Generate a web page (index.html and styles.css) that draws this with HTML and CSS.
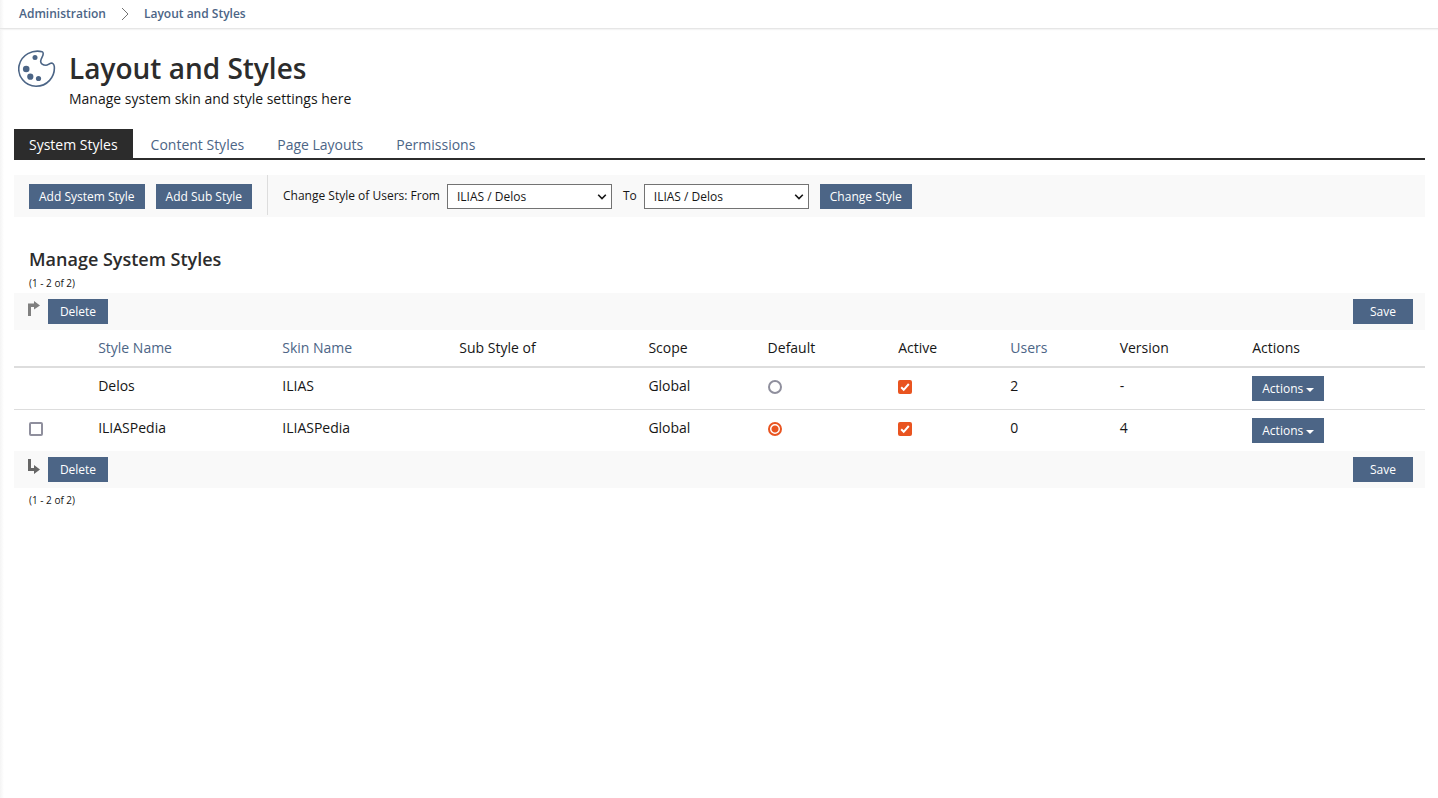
FILE: index.html
```html
<!DOCTYPE html>
<html lang="en">
<head>
<meta charset="utf-8">
<title>Layout and Styles</title>
<link rel="stylesheet" href="styles.css">
</head>
<body>
<nav class="breadcrumb" aria-label="Breadcrumb">
  <a href="#">Administration</a>
  <svg class="crumb-sep" width="8" height="14" viewBox="0 0 8 14" aria-hidden="true"><path d="M1 1l6 6-6 6" fill="none" stroke="#737373" stroke-width="1"/></svg>
  <a href="#">Layout and Styles</a>
</nav>
<main class="content">
  <header class="page-head">
    <svg class="page-icon" width="38" height="38" viewBox="0 0 38 38" aria-hidden="true">
      <path d="M24.2 1.7C14.500 -0.500 3.500 4.500 1.100 15.500C-1 26 7 36.200 18 36.300C29 36.300 37.200 27 36.300 16.500C36.100 14 34.500 12.700 32.700 13.200C30.500 13.900 29.800 15.300 28 15.300C25 15.300 22.400 13.500 22.700 11C23.100 8 25.200 6.500 25.200 3.700C25.200 2.600 25 1.900 24.200 1.700Z" fill="none" stroke="#4c6586" stroke-width="1.600" stroke-linejoin="round"/>
      <g fill="#4c6586"><circle cx="17" cy="7.500" r="2.500"/><circle cx="8.200" cy="19" r="3.300"/><circle cx="12.300" cy="26.700" r="3.100"/><circle cx="20.500" cy="28.500" r="2.600"/></g>
    </svg>
    <div>
      <h1>Layout and Styles</h1>
      <p class="lead">Manage system skin and style settings here</p>
    </div>
  </header>
  <nav class="tabs" aria-label="Sections">
    <a class="tab active" href="#">System Styles</a>
    <a class="tab" href="#">Content Styles</a>
    <a class="tab" href="#">Page Layouts</a>
    <a class="tab" href="#">Permissions</a>
  </nav>
  <form class="toolbar">
    <div class="toolbar-group">
      <button type="button" class="btn">Add System Style</button>
      <button type="button" class="btn">Add Sub Style</button>
    </div>
    <div class="toolbar-group fields">
      <div class="field">
        <label for="from">Change Style of Users: From</label>
        <span class="select"><select id="from"><option>ILIAS / Delos</option></select><svg width="10" height="6" viewBox="0 0 10 6" aria-hidden="true"><path d="M1.200 .8L5 4.600 8.800 .8" fill="none" stroke="#161616" stroke-width="1.600"/></svg></span>
      </div>
      <div class="field">
        <label for="to">To</label>
        <span class="select"><select id="to"><option>ILIAS / Delos</option></select><svg width="10" height="6" viewBox="0 0 10 6" aria-hidden="true"><path d="M1.200 .8L5 4.600 8.800 .8" fill="none" stroke="#161616" stroke-width="1.600"/></svg></span>
      </div>
      <button type="button" class="btn">Change Style</button>
    </div>
  </form>
  <form>
    <h2>Manage System Styles</h2>
    <p class="count">(1 - 2 of 2)</p>
    <div class="bar">
      <svg class="arrow" width="12" height="15" viewBox="0 0 12 15" aria-hidden="true"><path d="M0 15V2.500H6V0L12 4.500 6 8.500V6H3V15Z" fill="#808080"/></svg>
      <button type="button" class="btn wide">Delete</button>
      <button type="button" class="btn wide save">Save</button>
    </div>
    <table>
      <colgroup><col class="c-check"><col class="c-style"><col class="c-skin"><col class="c-sub"><col class="c-scope"><col class="c-default"><col class="c-active"><col class="c-users"><col class="c-version"><col class="c-actions"></colgroup>
      <thead>
        <tr><th></th><th><a href="#">Style Name</a></th><th><a href="#">Skin Name</a></th><th>Sub Style of</th><th>Scope</th><th>Default</th><th>Active</th><th><a href="#">Users</a></th><th>Version</th><th>Actions</th></tr>
      </thead>
      <tbody>
        <tr>
          <td></td><td>Delos</td><td>ILIAS</td><td></td><td>Global</td>
          <td><input type="radio" name="default" aria-label="Delos default"></td>
          <td><input type="checkbox" checked aria-label="Delos active"></td>
          <td>2</td><td>-</td>
          <td><button type="button" class="btn menu">Actions<span class="caret"></span></button></td>
        </tr>
        <tr>
          <td><input type="checkbox" aria-label="Select ILIASPedia"></td><td>ILIASPedia</td><td>ILIASPedia</td><td></td><td>Global</td>
          <td><input type="radio" name="default" checked aria-label="ILIASPedia default"></td>
          <td><input type="checkbox" checked aria-label="ILIASPedia active"></td>
          <td>0</td><td>4</td>
          <td><button type="button" class="btn menu">Actions<span class="caret"></span></button></td>
        </tr>
      </tbody>
    </table>
    <div class="bar">
      <svg class="arrow" width="12" height="15" viewBox="0 0 12 15" aria-hidden="true"><path d="M0 0H3V9H6V6L12 10.500 6 15V12H0Z" fill="#666"/></svg>
      <button type="button" class="btn wide">Delete</button>
      <button type="button" class="btn wide save">Save</button>
    </div>
    <p class="count after">(1 - 2 of 2)</p>
  </form>
</main>
</body>
</html>
```
FILE: styles.css
```css
* { box-sizing: border-box; }
body {
  margin: 0;
  min-height: 100vh;
  font: 14px/20px "Open Sans", sans-serif;
  color: #161616;
  background: #fff linear-gradient(to right, #f4f4f4, #fff) left / 4px 100% no-repeat;
}
a { color: #4c6586; text-decoration: none; }
h1, h2, p { margin: 0; }
.breadcrumb {
  display: flex;
  align-items: center;
  gap: 15px;
  height: 29px;
  padding: 0 19px 1px;
  border-bottom: 1px solid #e6e6e6;
  box-shadow: 0 1px 1px #f4f4f4;
  font-size: 12px;
  font-weight: 600;
}
.content { padding: 21px 13px 0 14px; }
.page-head { display: flex; gap: 13px; padding-left: 4px; }
h1 { font-size: 28px; line-height: 36px; font-weight: 600; color: #2c2c2c; }
.lead { margin-top: 3px; }
.tabs {
  display: flex;
  margin-top: 20px;
  border-bottom: 2px solid #2c2c2c;
}
.tab { padding: 6px 15px 3px; margin-right: 3px; }
.tab.active { background: #2c2c2c; color: #fff; }
.toolbar {
  display: flex;
  margin-top: 15px;
  padding-bottom: 2px;
  background: #f9f9f9;
  font-size: 12px;
}
.toolbar-group { display: flex; align-items: center; gap: 11px; padding: 9px 15px 6px; height: 40px; }
.fields { border-left: 1px solid #ddd; }
.field { display: flex; align-items: center; gap: 7px; }
.field label { padding-bottom: 2px; }
.btn {
  height: 25px;
  padding: 0 10px;
  border: 0;
  background: #4c6586;
  color: #fff;
  font: 12px/17px "Open Sans", sans-serif;
}
.select { display: grid; align-items: center; }
.select > * { grid-area: 1 / 1; }
.select svg { justify-self: end; margin-right: 5px; pointer-events: none; }
select {
  appearance: none;
  width: 165px;
  height: 25px;
  padding: 0 9px;
  border: 1px solid #737373;
  border-radius: 0;
  background: #fff;
  color: #161616;
  font: 12px/17px "Open Sans", sans-serif;
}
h2 { margin: 30px 0 0 15px; font-size: 18px; line-height: 25px; font-weight: 600; color: #2c2c2c; }
.count { padding: 3px 15px 2px; font-size: 10px; line-height: 16px; }
.count.after { padding-top: 4px; }
.bar {
  display: flex;
  align-items: center;
  gap: 8px;
  height: 37px;
  padding: 0 12px 0 14px;
  background: #f9f9f9;
}
.arrow { margin-bottom: 6px; }
.wide { width: 60px; }
.save { margin-left: auto; }
table { width: 100%; table-layout: fixed; border-collapse: separate; border-spacing: 0; }
th { padding: 8px 15px; border-bottom: 2px solid #ddd; font-weight: 400; text-align: left; }
td { height: 41px; padding: 8px 15px; vertical-align: top; }
tbody tr:first-child td { height: 42px; border-bottom: 1px solid #ddd; }
.c-check { width: 4.9%; }
.c-style { width: 13.05%; }
.c-skin { width: 12.55%; }
.c-sub { width: 13.4%; }
.c-scope { width: 8.45%; }
.c-default { width: 9.25%; }
.c-active { width: 7.95%; }
.c-users { width: 7.75%; }
.c-version { width: 9.4%; }
input {
  display: block;
  appearance: none;
  width: 14px;
  height: 14px;
  margin: 4px 0 0;
  border: 2px solid #8f8f9d;
  background: #fff;
}
input[type="checkbox"] { border-radius: 2px; }
input[type="radio"] { border-radius: 50%; }
input:checked { border-color: #e95420; }
input[type="radio"]:checked { background: radial-gradient(circle, #e95420 3px, #fff 4px); }
input[type="checkbox"]:checked {
  background: #e95420 url("data:image/svg+xml,%3Csvg xmlns='http://www.w3.org/2000/svg' viewBox='0 0 10 10'%3E%3Cpath d='M1.200 5.300L3.700 7.800 8.800 2' fill='none' stroke='white' stroke-width='2'/%3E%3C/svg%3E") center / 10px no-repeat;
}
.menu { display: flex; align-items: center; gap: 3px; }
.caret { border: 4px solid transparent; border-top-color: #fff; border-bottom: 0; margin-top: 3px; }
```
